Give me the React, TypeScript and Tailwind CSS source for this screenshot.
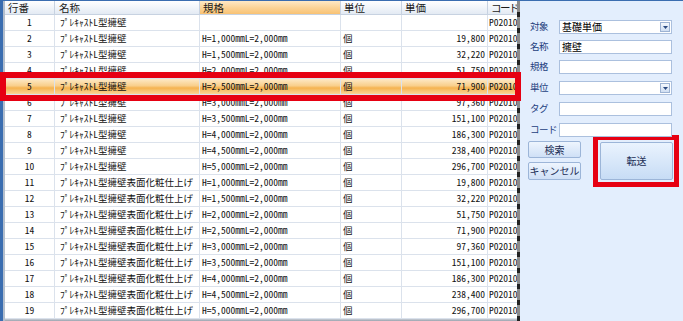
import React from "react";

const NAME1 = "ﾌﾟﾚｷｬｽﾄL型擁壁";
const NAME2 = "ﾌﾟﾚｷｬｽﾄL型擁壁表面化粧仕上げ";
const specs = [
  "H=1,000mmL=2,000mm",
  "H=1,500mmL=2,000mm",
  "H=2,000mmL=2,000mm",
  "H=2,500mmL=2,000mm",
  "H=3,000mmL=2,000mm",
  "H=3,500mmL=2,000mm",
  "H=4,000mmL=2,000mm",
  "H=4,500mmL=2,000mm",
  "H=5,000mmL=2,000mm",
];
const prices = ["19,800", "32,220", "51,750", "71,900", "97,360", "151,100", "186,300", "238,400", "296,700"];

type Row = { no: number; name: string; spec: string; unit: string; price: string; code: string };
const rows: Row[] = [
  { no: 1, name: NAME1, spec: "", unit: "", price: "", code: "P02010" },
  ...specs.map((s, i) => ({ no: i + 2, name: NAME1, spec: s, unit: "個", price: prices[i], code: "P02010" })),
  ...specs.map((s, i) => ({ no: i + 11, name: NAME2, spec: s, unit: "個", price: prices[i], code: "P02010" })),
];

const cols = "grid grid-cols-[50px_145px_141px_61px_86px_60px]";
const dataFont = { fontFamily: "'Noto Sans Mono CJK JP', 'Noto Sans CJK JP', monospace" };
const uiFont = { fontFamily: "'Noto Sans CJK JP', sans-serif" };

function HeaderCell({ children, active }: { children: React.ReactNode; active?: boolean }) {
  return (
    <div
      className={
        "h-full border-r border-[#c7d2e1] pl-[3px] flex items-center text-[10.5px] leading-[13px] text-[#1a1a1a] whitespace-nowrap " +
        (active
          ? "bg-[linear-gradient(to_bottom,#fee9c6,#fbd294_55%,#f8c274)]"
          : "bg-[linear-gradient(to_bottom,#ffffff,#f1f5fa_50%,#e3eaf3)]")
      }
    >
      {children}
    </div>
  );
}

function Field({ label, select, value, mt }: { label: string; select?: boolean; value?: string; mt: string }) {
  return (
    <div className={"flex items-center h-[14px] " + mt}>
      <div className="w-[29px] text-[9.5px] leading-none text-[#23407e] whitespace-nowrap tracking-[-0.5px]">{label}</div>
      <div className="relative w-[113px] h-[14px] bg-white border border-[#abc0de] flex items-center pl-[2px] text-[10px] leading-none text-black">
        {value}
        {select && (
          <div className="absolute right-[1px] top-[1px] w-[10px] h-[10px] border border-[#9db3d3] bg-[linear-gradient(to_bottom,#f4f8fd,#cfdef2)] flex items-center justify-center">
            <svg width="5" height="3" viewBox="0 0 5 3">
              <path d="M0 0h5L2.5 3z" fill="#2b4a80" />
            </svg>
          </div>
        )}
      </div>
    </div>
  );
}

export default function App() {
  return (
    <div className="relative w-[683px] h-[321px] overflow-hidden flex flex-col bg-[#e3eefd]" style={uiFont}>
      <div className="h-px bg-[#3a6db0] shrink-0" />
      <div className="flex flex-1 min-h-0">
        <div className="w-[3px] bg-[#3a6db0]" />
        <div className="w-[2px] bg-[#b3becc]" />
        <div className="w-[512px] flex flex-col overflow-hidden bg-white">
          <div className={cols + " h-[14px] shrink-0 border-b border-[#c7d2e1]"}>
            <HeaderCell>行番</HeaderCell>
            <HeaderCell>
              <span className="pl-[1px]">名称</span>
            </HeaderCell>
            <HeaderCell active>規格</HeaderCell>
            <HeaderCell>単位</HeaderCell>
            <HeaderCell>単価</HeaderCell>
            <HeaderCell>
              <span className="tracking-[-1.5px]">コード</span>
            </HeaderCell>
          </div>
          {rows.map((r) => {
            const sel = r.no === 5;
            return (
              <div
                key={r.no}
                className={
                  cols +
                  " h-[16px] shrink-0 border-b border-[#dbe2ec] text-[9.5px] leading-none text-[#111] " +
                  (sel ? "bg-[linear-gradient(to_bottom,#fde9c6,#f9cf8c_45%,#f5b350_60%,#fad597)]" : "bg-white")
                }
                style={dataFont}
              >
                <div className="border-r border-[#dbe2ec] flex items-center justify-center">{r.no}</div>
                <div className="border-r border-[#dbe2ec] flex items-center pl-[5px] whitespace-nowrap overflow-hidden">{r.name}</div>
                <div className="border-r border-[#dbe2ec] flex items-center pl-[2px] whitespace-nowrap overflow-hidden">{r.spec}</div>
                <div className="border-r border-[#dbe2ec] flex items-center pl-[2px]">{r.unit}</div>
                <div className="border-r border-[#dbe2ec] flex items-center justify-end pr-[2px]">{r.price}</div>
                <div className="flex items-center pl-[1px] whitespace-nowrap">{r.code}</div>
              </div>
            );
          })}
          <div className="flex-1 bg-[linear-gradient(to_bottom,#c9ced6,#9aa3ae)]" />
        </div>
        <div className="w-[3px] bg-[repeating-linear-gradient(to_bottom,#8c8c8c_0px,#8c8c8c_11px,#222_11px,#222_16px)]" />
        <div className="flex-1 flex flex-col pl-[10px] pt-[19px]">
          <Field label="対象" select value="基礎単価" mt="" />
          <Field label="名称" value="擁壁" mt="mt-[6px]" />
          <Field label="規格" mt="mt-[6px]" />
          <Field label="単位" select mt="mt-[7px]" />
          <Field label="タグ" mt="mt-[7px]" />
          <Field label="コード" mt="mt-[7px]" />
          <div className="flex -mt-[2px] -ml-[2px]">
            <div className="flex flex-col pt-[6px]">
              <button className="w-[53px] h-[17px] rounded-[2px] border border-[#9cb5d8] bg-[linear-gradient(to_bottom,#eef5fe,#cfe0f6)] text-[10px] leading-none text-[#1b2d55] flex items-center justify-center">
                検索
              </button>
              <button className="mt-[4px] w-[53px] h-[18px] rounded-[2px] border border-[#9cb5d8] bg-[linear-gradient(to_bottom,#eef5fe,#cfe0f6)] text-[10px] leading-none text-[#1b2d55] flex items-center justify-center">
                キャンセル
              </button>
            </div>
            <div className="ml-[12px] w-[86px] h-[52px] border-[5px] border-[#e60012] pl-[2px] pr-[1px] py-[2px]">
              <button className="w-full h-full rounded-[2px] border border-[#9cb5d8] bg-[linear-gradient(to_bottom,#eaf3fe,#c7dcf5)] text-[10px] leading-none text-[#1b2d55] flex items-center justify-center">
                転送
              </button>
            </div>
          </div>
        </div>
      </div>
      <div className="absolute left-0 top-[72px] w-[521px] h-[29px] border-[6px] border-[#e60012] pointer-events-none" />
    </div>
  );
}
